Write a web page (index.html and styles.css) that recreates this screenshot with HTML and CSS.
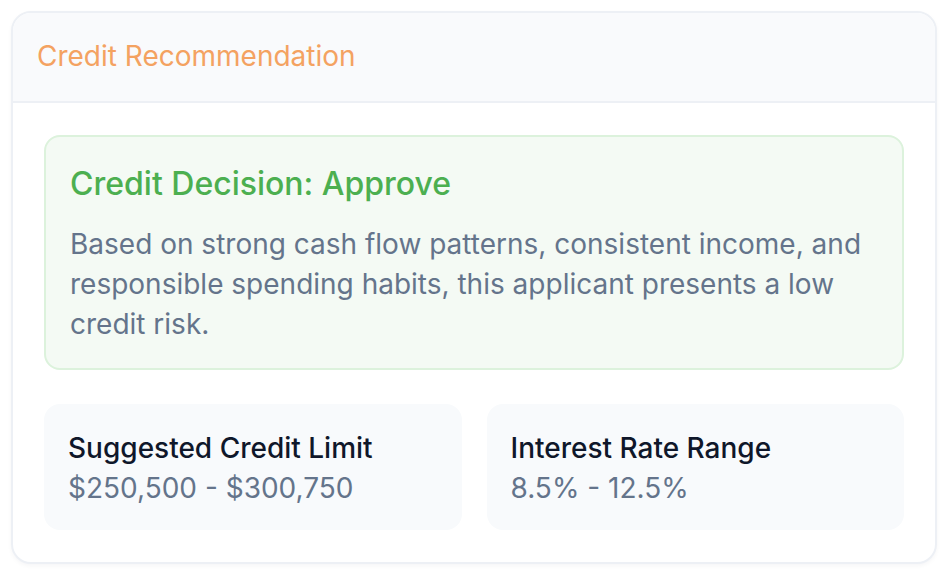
FILE: index.html
```html
<!DOCTYPE html>
<html>
<head>
<meta charset="utf-8">
<link rel="stylesheet" href="styles.css">
</head>
<body>
<div class="card">
  <div class="card-header">
    <h2 class="card-title">Credit Recommendation</h2>
  </div>
  <div class="card-body">
    <div class="decision">
      <h3 class="decision-title">Credit Decision: Approve</h3>
      <p class="decision-text">Based on strong cash flow patterns, consistent income, and responsible spending habits, this applicant presents a low credit risk.</p>
    </div>
    <div class="stats">
      <div class="stat">
        <div class="stat-label">Suggested Credit Limit</div>
        <div class="stat-value">$250,500 - $300,750</div>
      </div>
      <div class="stat">
        <div class="stat-label">Interest Rate Range</div>
        <div class="stat-value">8.5% - 12.5%</div>
      </div>
    </div>
  </div>
</div>
</body>
</html>
```
FILE: styles.css
```css
* { box-sizing: border-box; }
html, body { margin: 0; padding: 0; background: #ffffff; }
body { font-family: Inter, "Noto Sans", sans-serif; padding: 11px; }
.card {
  width: 926px;
  border: 2px solid #edf0f5;
  border-radius: 20px;
  overflow: hidden;
  background: #ffffff;
  box-shadow: 0 2px 4px rgba(15, 23, 42, 0.04);
}
.card-header {
  height: 90px;
  background: #f9fafc;
  border-bottom: 2px solid #edf0f5;
  display: flex;
  align-items: center;
  padding: 0 24px;
}
.card-title {
  margin: 0;
  font-size: 28px;
  font-weight: 400;
  color: #f4a261;
  line-height: 1.2;
}
.card-body { padding: 32px 31px 32px 31px; }
.decision {
  background: #f4faf4;
  border: 2px solid #dcf2dc;
  border-radius: 16px;
  padding: 28px 24px 24px 24px;
}
.decision-title {
  margin: 0 0 20px 0;
  font-size: 32px;
  font-weight: 500;
  color: #4caf50;
  line-height: 1.21;
}
.decision-text {
  margin: 0;
  font-size: 28px;
  line-height: 40px;
  color: #64748b;
}
.stats {
  display: grid;
  grid-template-columns: 1fr 1fr;
  gap: 25px;
  margin-top: 34px;
}
.stat {
  background: #f8fafc;
  border-radius: 16px;
  padding: 24px 24px 22px 24px;
}
.stat-label {
  font-size: 28px;
  line-height: 40px;
  color: #0f172a;
  font-weight: 500;
}
.stat-value {
  font-size: 28px;
  line-height: 40px;
  color: #64748b;
}
```
